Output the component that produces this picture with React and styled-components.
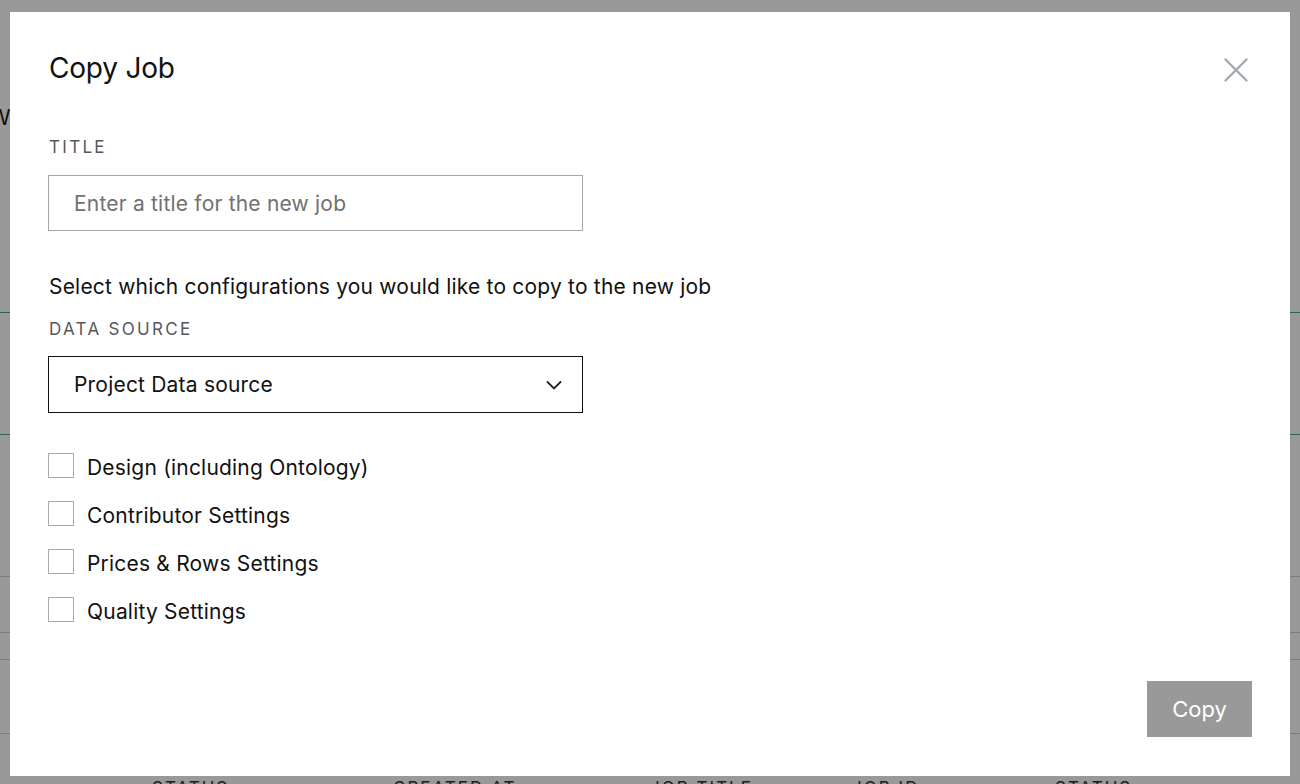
import React from "react";
import styled, { createGlobalStyle } from "styled-components";

const GlobalStyle = createGlobalStyle`
  html, body {
    margin: 0;
    padding: 0;
    background: #fff;
    font-family: Inter, "Noto Sans", sans-serif;
    overflow: hidden;
  }
  * { box-sizing: border-box; }
`;

const Page = styled.div`
  width: 1300px;
  height: 784px;
  overflow: hidden;
  display: flex;
  flex-direction: column;
  color: #222;
`;

const PageTitle = styled.div`
  height: 313px;
  flex-shrink: 0;
  padding-top: 104px;
  margin-left: -11px;
  font-size: 22px;
  border-bottom: 1px solid #4fa39c;
`;

const Band = styled.div`
  height: ${(p) => p.h}px;
  flex-shrink: 0;
  border-bottom: 1px solid ${(p) => (p.accent ? "#4fa39c" : "#cfcfcf")};
`;

const TableHead = styled.div`
  flex-shrink: 0;
  display: grid;
  grid-template-columns: 241px 257px 202px 203px 1fr;
  padding: 44px 0 0 152px;
  font-size: 17px;
  letter-spacing: 2px;
  text-transform: uppercase;
  color: #333;
`;

const Overlay = styled.div`
  position: fixed;
  inset: 0;
  background: rgba(0, 0, 0, 0.4);
`;

const Modal = styled.div`
  position: fixed;
  top: 12px;
  left: 10px;
  width: 1280px;
  height: 764px;
  background: #fff;
  padding: 38px 38px 39px 38px;
  display: flex;
  flex-direction: column;
  color: #111;
`;

const Header = styled.div`
  display: flex;
  justify-content: space-between;
  align-items: flex-start;
`;

const Title = styled.h2`
  margin: 0 0 0 1px;
  font-size: 28px;
  font-weight: 400;
  line-height: 36px;
  letter-spacing: -0.2px;
`;

const CloseButton = styled.button`
  border: 0;
  background: none;
  padding: 0;
  margin: 8px 4px 0 0;
  width: 24px;
  height: 24px;
  cursor: pointer;
  display: flex;
`;

const Label = styled.div`
  margin: ${(p) => p.top}px 0 0 1px;
  font-size: 17px;
  line-height: 20px;
  letter-spacing: 2.3px;
  color: #55595d;
  text-transform: uppercase;
`;

const Field = styled.div`
  margin-top: ${(p) => p.top}px;
  width: 535px;
  height: ${(p) => p.h}px;
  border: 1px solid ${(p) => (p.dark ? "#111" : "#a2a7aa")};
  display: flex;
  align-items: center;
  justify-content: space-between;
  padding: 0 20px 0 25px;
  font-size: 21px;
  letter-spacing: 0.2px;
  color: ${(p) => (p.muted ? "#717171" : "#111")};
`;

const Intro = styled.div`
  margin: 44px 0 0 1px;
  font-size: 21px;
  letter-spacing: 0.2px;
  line-height: 24px;
`;

const Options = styled.div`
  margin-top: 40px;
  display: flex;
  flex-direction: column;
  gap: 23px;
`;

const Option = styled.label`
  display: flex;
  align-items: flex-start;
  gap: 13px;
  height: 25px;
  cursor: pointer;
`;

const Box = styled.span`
  width: 26px;
  height: 25px;
  border: 1px solid #a8adb0;
  background: #fff;
  flex-shrink: 0;
`;

const OptionText = styled.span`
  margin-top: 2px;
  font-size: 21px;
  letter-spacing: 0.2px;
  line-height: 25px;
`;

const Footer = styled.div`
  margin-top: auto;
  display: flex;
  justify-content: flex-end;
`;

const CopyButton = styled.button`
  width: 105px;
  height: 56px;
  border: 0;
  background: #999999;
  color: #fff;
  font-family: inherit;
  font-size: 22px;
  cursor: pointer;
`;

const options = [
  "Design (including Ontology)",
  "Contributor Settings",
  "Prices & Rows Settings",
  "Quality Settings",
];

export default function App() {
  return (
    <>
      <GlobalStyle />
      <Page>
        <PageTitle>Workflows</PageTitle>
        <Band h={122} accent />
        <Band h={142} />
        <Band h={56} />
        <Band h={27} />
        <Band h={74} />
        <TableHead>
          <span>Status</span>
          <span>Created at</span>
          <span>Job title</span>
          <span>Job ID</span>
          <span>Status</span>
        </TableHead>
      </Page>
      <Overlay />
      <Modal>
        <Header>
          <Title>Copy Job</Title>
          <CloseButton aria-label="Close">
            <svg width="24" height="24" viewBox="0 0 24 24">
              <path
                d="M1.5 1.5 L22.5 22.5 M22.5 1.5 L1.5 22.5"
                stroke="#a3aaae"
                strokeWidth="2.4"
                strokeLinecap="round"
              />
            </svg>
          </CloseButton>
        </Header>
        <Label top={51}>Title</Label>
        <Field top={18} h={56} muted>
          Enter a title for the new job
        </Field>
        <Intro>Select which configurations you would like to copy to the new job</Intro>
        <Label top={20}>Data source</Label>
        <Field top={17} h={57} dark>
          Project Data source
          <svg width="16" height="10" viewBox="0 0 16 10">
            <path
              d="M1 1.5 L8 8.5 L15 1.5"
              fill="none"
              stroke="#222"
              strokeWidth="1.8"
            />
          </svg>
        </Field>
        <Options>
          {options.map((o) => (
            <Option key={o}>
              <Box />
              <OptionText>{o}</OptionText>
            </Option>
          ))}
        </Options>
        <Footer>
          <CopyButton>Copy</CopyButton>
        </Footer>
      </Modal>
    </>
  );
}
